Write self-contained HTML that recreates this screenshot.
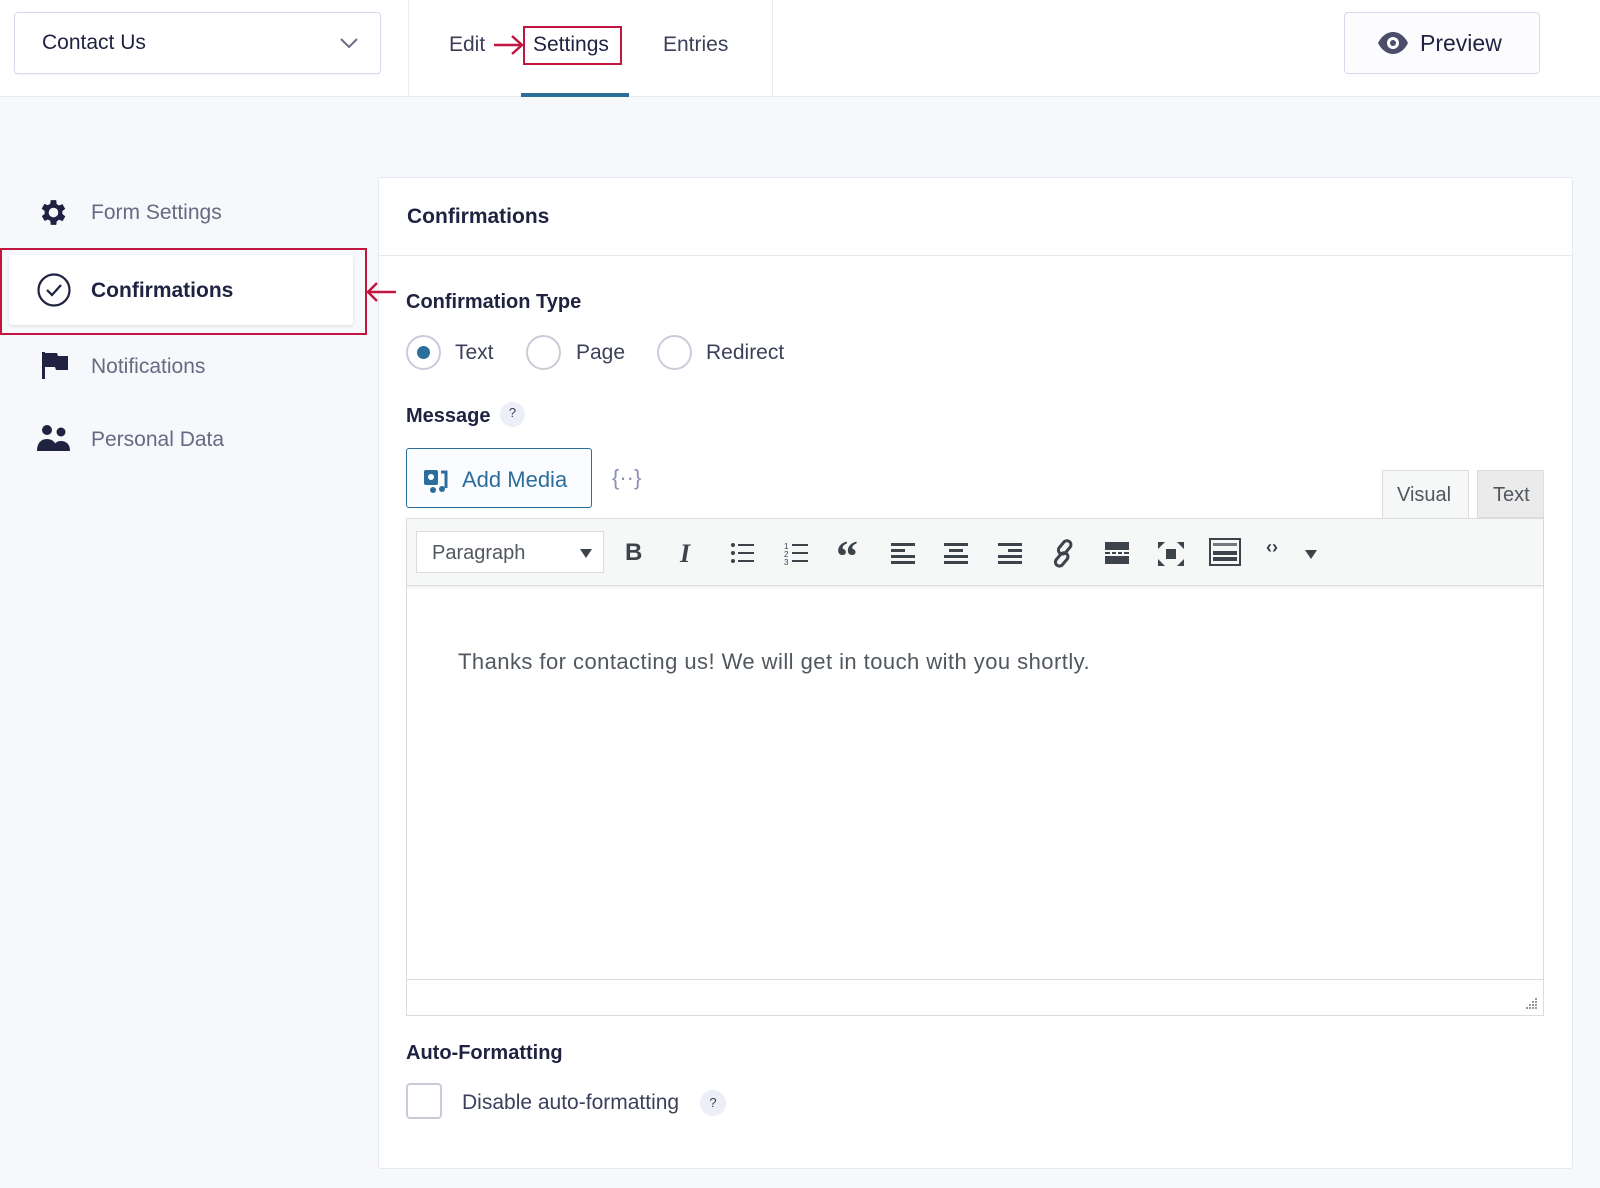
<!DOCTYPE html>
<html><head><meta charset="utf-8"><style>
*{box-sizing:border-box;margin:0;padding:0}
body{width:1600px;height:1188px;background:#f6f8fb;font-family:"Liberation Sans",sans-serif;color:#242748;position:relative;overflow:hidden}
.a{position:absolute}
.t{font-size:21px;line-height:1;white-space:nowrap}
.ic{position:absolute;top:541px}
</style></head><body>
<div class="a" style="left:0;top:0;width:1600px;height:97px;background:#fff;border-bottom:1px solid #e8ebf3"></div>
<div class="a" style="left:14px;top:12px;width:367px;height:62px;border:1px solid #d6d9ea;border-radius:4px;background:#fff;box-shadow:0 1px 2px rgba(0,0,0,.06)"></div>
<div class="a t" style="left:42px;top:32px;color:#1f2240">Contact Us</div>
<svg class="a" style="left:339px;top:36px" width="20" height="14"><path d="M2 3l8 8 8-8" fill="none" stroke="#6b6e85" stroke-width="2"/></svg>
<div class="a" style="left:408px;top:0;width:1px;height:97px;background:#e8ebf3"></div>
<div class="a" style="left:772px;top:0;width:1px;height:97px;background:#e8ebf3"></div>
<div class="a t" style="left:449px;top:34px;color:#3c3f5a">Edit</div>
<svg class="a" style="left:492px;top:32px" width="34" height="26"><path d="M2 13h28M20 4l10 9-10 9" fill="none" stroke="#c0163f" stroke-width="2.5"/></svg>
<div class="a" style="left:523px;top:26px;width:99px;height:39px;border:2px solid #c0163f"></div>
<div class="a t" style="left:533px;top:34px;color:#1f2240">Settings</div>
<div class="a t" style="left:663px;top:34px;color:#3c3f5a">Entries</div>
<div class="a" style="left:521px;top:93px;width:108px;height:4px;background:#2c6e9b"></div>
<div class="a" style="left:1344px;top:12px;width:196px;height:62px;border:1px solid #d6d9ea;border-radius:4px;background:#fcfcff"></div>
<svg class="a" style="left:1377px;top:31px" width="32" height="24"><path d="M1 12C5 4 11 1 16 1s11 3 15 11c-4 8-10 11-15 11S5 20 1 12z" fill="#4b4d6b"/><circle cx="16" cy="12" r="6" fill="#fff"/><circle cx="16" cy="12" r="3" fill="#4b4d6b"/></svg>
<div class="a t" style="left:1420px;top:32px;font-size:23px;color:#1f2240">Preview</div>

<!-- sidebar -->
<svg class="a" style="left:37px;top:196px" width="33" height="33" viewBox="0 0 24 24"><path fill="#1f2240" d="M19.4 13a7.5 7.5 0 000-2l2.1-1.6-2-3.5-2.5 1a7.7 7.7 0 00-1.7-1L15 3h-4l-.4 2.7a7.7 7.7 0 00-1.7 1l-2.5-1-2 3.5L6.6 11a7.5 7.5 0 000 2l-2.1 1.6 2 3.5 2.5-1a7.7 7.7 0 001.7 1L11 21h4l.4-2.7a7.7 7.7 0 001.7-1l2.5 1 2-3.5zM13 15.5a3.5 3.5 0 110-7 3.5 3.5 0 010 7z" transform="translate(-1 0)"/></svg>
<div class="a t" style="left:91px;top:202px;color:#666a82">Form Settings</div>
<div class="a" style="left:0;top:248px;width:367px;height:87px;border:2px solid #c0163f"></div>
<div class="a" style="left:9px;top:255px;width:344px;height:70px;background:#fff;border-radius:3px;box-shadow:0 1px 3px rgba(0,0,0,.12)"></div>
<svg class="a" style="left:36px;top:272px" width="36" height="36"><circle cx="18" cy="18" r="15.5" fill="none" stroke="#1f2240" stroke-width="2.2"/><path d="M11 18l5 5 9-10" fill="none" stroke="#1f2240" stroke-width="2.2"/></svg>
<div class="a t" style="left:91px;top:280px;font-weight:bold;color:#1f2240">Confirmations</div>
<svg class="a" style="left:40px;top:350px" width="30" height="30"><path d="M2 2h3v27H2zM5 3h12l1 3h10v14H16l-1-3H5z" fill="#1f2240"/></svg>
<div class="a t" style="left:91px;top:356px;color:#666a82">Notifications</div>
<svg class="a" style="left:36px;top:424px" width="36" height="28"><circle cx="11" cy="6" r="5" fill="#1f2240"/><circle cx="25" cy="8" r="4.5" fill="#1f2240"/><path d="M1 27c0-8 4-12 10-12s10 4 10 12z" fill="#1f2240"/><path d="M17 27c0-7 3-10 8-10s9 3 9 10z" fill="#1f2240"/></svg>
<div class="a t" style="left:91px;top:429px;color:#666a82">Personal Data</div>

<!-- panel -->
<div class="a" style="left:378px;top:177px;width:1195px;height:992px;background:#fff;border:1px solid #e6e9f2;border-radius:3px"></div>
<svg class="a" style="left:364px;top:280px;z-index:5" width="34" height="24"><path d="M32 12H4M13 3L4 12l9 9" fill="none" stroke="#c0163f" stroke-width="2.5"/></svg>
<div class="a" style="left:378px;top:255px;width:1195px;height:1px;background:#e6e9f2"></div>
<div class="a t" style="left:407px;top:206px;font-weight:bold;color:#1f2240">Confirmations</div>
<div class="a t" style="left:406px;top:292px;font-weight:bold;color:#1f2240;font-size:20px">Confirmation Type</div>
<div class="a" style="left:406px;top:335px;width:35px;height:35px;border:2px solid #c9ccd9;border-radius:50%"></div>
<div class="a" style="left:417px;top:346px;width:13px;height:13px;background:#2c6e9b;border-radius:50%"></div>
<div class="a t" style="left:455px;top:342px;color:#3c3f5a">Text</div>
<div class="a" style="left:526px;top:335px;width:35px;height:35px;border:2px solid #c9ccd9;border-radius:50%"></div>
<div class="a t" style="left:576px;top:342px;color:#3c3f5a">Page</div>
<div class="a" style="left:657px;top:335px;width:35px;height:35px;border:2px solid #c9ccd9;border-radius:50%"></div>
<div class="a t" style="left:706px;top:342px;color:#3c3f5a">Redirect</div>
<div class="a t" style="left:406px;top:406px;font-weight:bold;color:#1f2240;font-size:20px">Message</div>
<div class="a" style="left:500px;top:402px;width:25px;height:25px;border-radius:50%;background:#eceef8;font-size:13px;text-align:center;line-height:22px;color:#3c3f5a">?</div>
<div class="a" style="left:406px;top:448px;width:186px;height:60px;border:1px solid #2c6e9b;border-radius:3px;background:#fafcff"></div>
<svg class="a" style="left:422px;top:467px" width="30" height="28"><rect x="2" y="3" width="14" height="15" rx="2" fill="#2c6e9b"/><circle cx="9" cy="10" r="3" fill="#fff"/><path d="M19 5h5v16" fill="none" stroke="#2c6e9b" stroke-width="3"/><circle cx="20" cy="22" r="3" fill="#2c6e9b"/><circle cx="11" cy="23" r="3" fill="#2c6e9b"/></svg>
<div class="a t" style="left:462px;top:469px;color:#2c6e9b;font-size:22px">Add Media</div>
<div class="a t" style="left:612px;top:467px;color:#8a8fb5;font-size:22px">{··}</div>
<div class="a" style="left:1382px;top:470px;width:87px;height:49px;background:#f6f7f7;border:1px solid #dcdcde;border-bottom:none"></div>
<div class="a t" style="left:1397px;top:485px;color:#50575e;font-size:20px">Visual</div>
<div class="a" style="left:1477px;top:470px;width:67px;height:48px;background:#ebebeb;border:1px solid #dcdcde"></div>
<div class="a t" style="left:1493px;top:485px;color:#50575e;font-size:20px">Text</div>
<div class="a" style="left:406px;top:518px;width:1138px;height:498px;border:1px solid #dcdcde"></div>
<div class="a" style="left:407px;top:519px;width:1136px;height:67px;background:#f6f7f7;border-bottom:1px solid #dcdcde;box-shadow:0 2px 2px rgba(0,0,0,.06)"></div>
<div class="a" style="left:416px;top:531px;width:188px;height:42px;background:#fff;border:1px solid #dcdcde"></div>
<div class="a t" style="left:432px;top:543px;color:#50575e;font-size:20px">Paragraph</div>
<div class="a" style="left:580px;top:549px;border-left:6px solid transparent;border-right:6px solid transparent;border-top:9px solid #3c434a"></div>
<div class="a t" style="left:625px;top:541px;font-weight:bold;font-size:24px;color:#3c434a">B</div>
<div class="a t" style="left:680px;top:541px;font-style:italic;font-family:'Liberation Serif',serif;font-weight:bold;font-size:26px;color:#3c434a">I</div>
<svg class="ic" style="left:730px" width="26" height="24"><g fill="#3c434a"><circle cx="3" cy="4" r="2"/><circle cx="3" cy="12" r="2"/><circle cx="3" cy="20" r="2"/><rect x="8" y="3" width="16" height="2"/><rect x="8" y="11" width="16" height="2"/><rect x="8" y="19" width="16" height="2"/></g></svg>
<svg class="ic" style="left:784px" width="26" height="24"><g fill="#3c434a"><text x="0" y="8" font-size="8">1</text><text x="0" y="16" font-size="8">2</text><text x="0" y="24" font-size="8">3</text><rect x="8" y="3" width="16" height="2"/><rect x="8" y="11" width="16" height="2"/><rect x="8" y="19" width="16" height="2"/></g></svg>
<div class="a t" style="left:836px;top:535px;font-family:'Liberation Serif',serif;font-weight:bold;font-size:44px;color:#3c434a;line-height:44px">“</div>
<svg class="ic" style="left:890px" width="26" height="24"><g fill="#3c434a"><rect x="1" y="2" width="24" height="3"/><rect x="1" y="8" width="14" height="3"/><rect x="1" y="14" width="24" height="3"/><rect x="1" y="20" width="24" height="3"/></g></svg>
<svg class="ic" style="left:943px" width="26" height="24"><g fill="#3c434a"><rect x="1" y="2" width="24" height="3"/><rect x="6" y="8" width="14" height="3"/><rect x="1" y="14" width="24" height="3"/><rect x="1" y="20" width="24" height="3"/></g></svg>
<svg class="ic" style="left:997px" width="26" height="24"><g fill="#3c434a"><rect x="1" y="2" width="24" height="3"/><rect x="11" y="8" width="14" height="3"/><rect x="1" y="14" width="24" height="3"/><rect x="1" y="20" width="24" height="3"/></g></svg>
<svg class="ic" style="left:1050px;top:539px" width="28" height="30"><g fill="none" stroke="#3c434a" stroke-width="3"><rect x="11" y="1" width="8" height="15" rx="4" transform="rotate(40 15 8)"/><rect x="8" y="13" width="8" height="15" rx="4" transform="rotate(40 12 20)"/></g></svg>
<svg class="ic" style="left:1104px" width="26" height="24"><g fill="#3c434a"><rect x="1" y="1" width="24" height="8"/><rect x="1" y="11" width="5" height="2"/><rect x="8" y="11" width="4" height="2"/><rect x="14" y="11" width="4" height="2"/><rect x="20" y="11" width="5" height="2"/><rect x="1" y="15" width="24" height="8"/></g></svg>
<svg class="ic" style="left:1157px" width="28" height="26"><g fill="#3c434a"><rect x="9" y="8" width="10" height="10"/><path d="M1 1h7L1 8zM27 1h-7l7 7zM1 25h7L1 18zM27 25h-7l7-7z"/></g></svg>
<svg class="ic" style="left:1209px;top:538px" width="32" height="28"><g fill="none" stroke="#3c434a" stroke-width="2"><rect x="1" y="1" width="30" height="26"/></g><g fill="#3c434a"><rect x="4" y="5" width="24" height="3" opacity=".7"/><rect x="4" y="13" width="24" height="4"/><rect x="4" y="19" width="24" height="4"/></g></svg>
<div class="a t" style="left:1266px;top:538px;font-size:18px;color:#3c434a;font-weight:bold">‹›</div>
<div class="a" style="left:1305px;top:550px;border-left:6px solid transparent;border-right:6px solid transparent;border-top:9px solid #3c434a"></div>
<div class="a t" style="left:458px;top:651px;font-family:Arial,'Liberation Sans',sans-serif;font-size:22px;letter-spacing:0.45px;color:#50575e">Thanks for contacting us! We will get in touch with you shortly.</div>
<div class="a" style="left:407px;top:979px;width:1136px;height:1px;background:#dcdcde"></div>
<svg class="a" style="left:1524px;top:996px" width="14" height="14"><g fill="#999"><rect x="11" y="2" width="2" height="2"/><rect x="8" y="5" width="2" height="2"/><rect x="11" y="5" width="2" height="2"/><rect x="5" y="8" width="2" height="2"/><rect x="8" y="8" width="2" height="2"/><rect x="11" y="8" width="2" height="2"/><rect x="2" y="11" width="2" height="2"/><rect x="5" y="11" width="2" height="2"/><rect x="8" y="11" width="2" height="2"/><rect x="11" y="11" width="2" height="2"/></g></svg>
<div class="a t" style="left:406px;top:1043px;font-weight:bold;color:#1f2240;font-size:20px">Auto-Formatting</div>
<div class="a" style="left:406px;top:1083px;width:36px;height:36px;border:2px solid #c9ccd9;border-radius:4px"></div>
<div class="a t" style="left:462px;top:1092px;color:#3c3f5a">Disable auto-formatting</div>
<div class="a" style="left:700px;top:1090px;width:26px;height:26px;border-radius:50%;background:#eceef8;font-size:13px;text-align:center;line-height:26px;color:#3c3f5a">?</div>
</body></html>
